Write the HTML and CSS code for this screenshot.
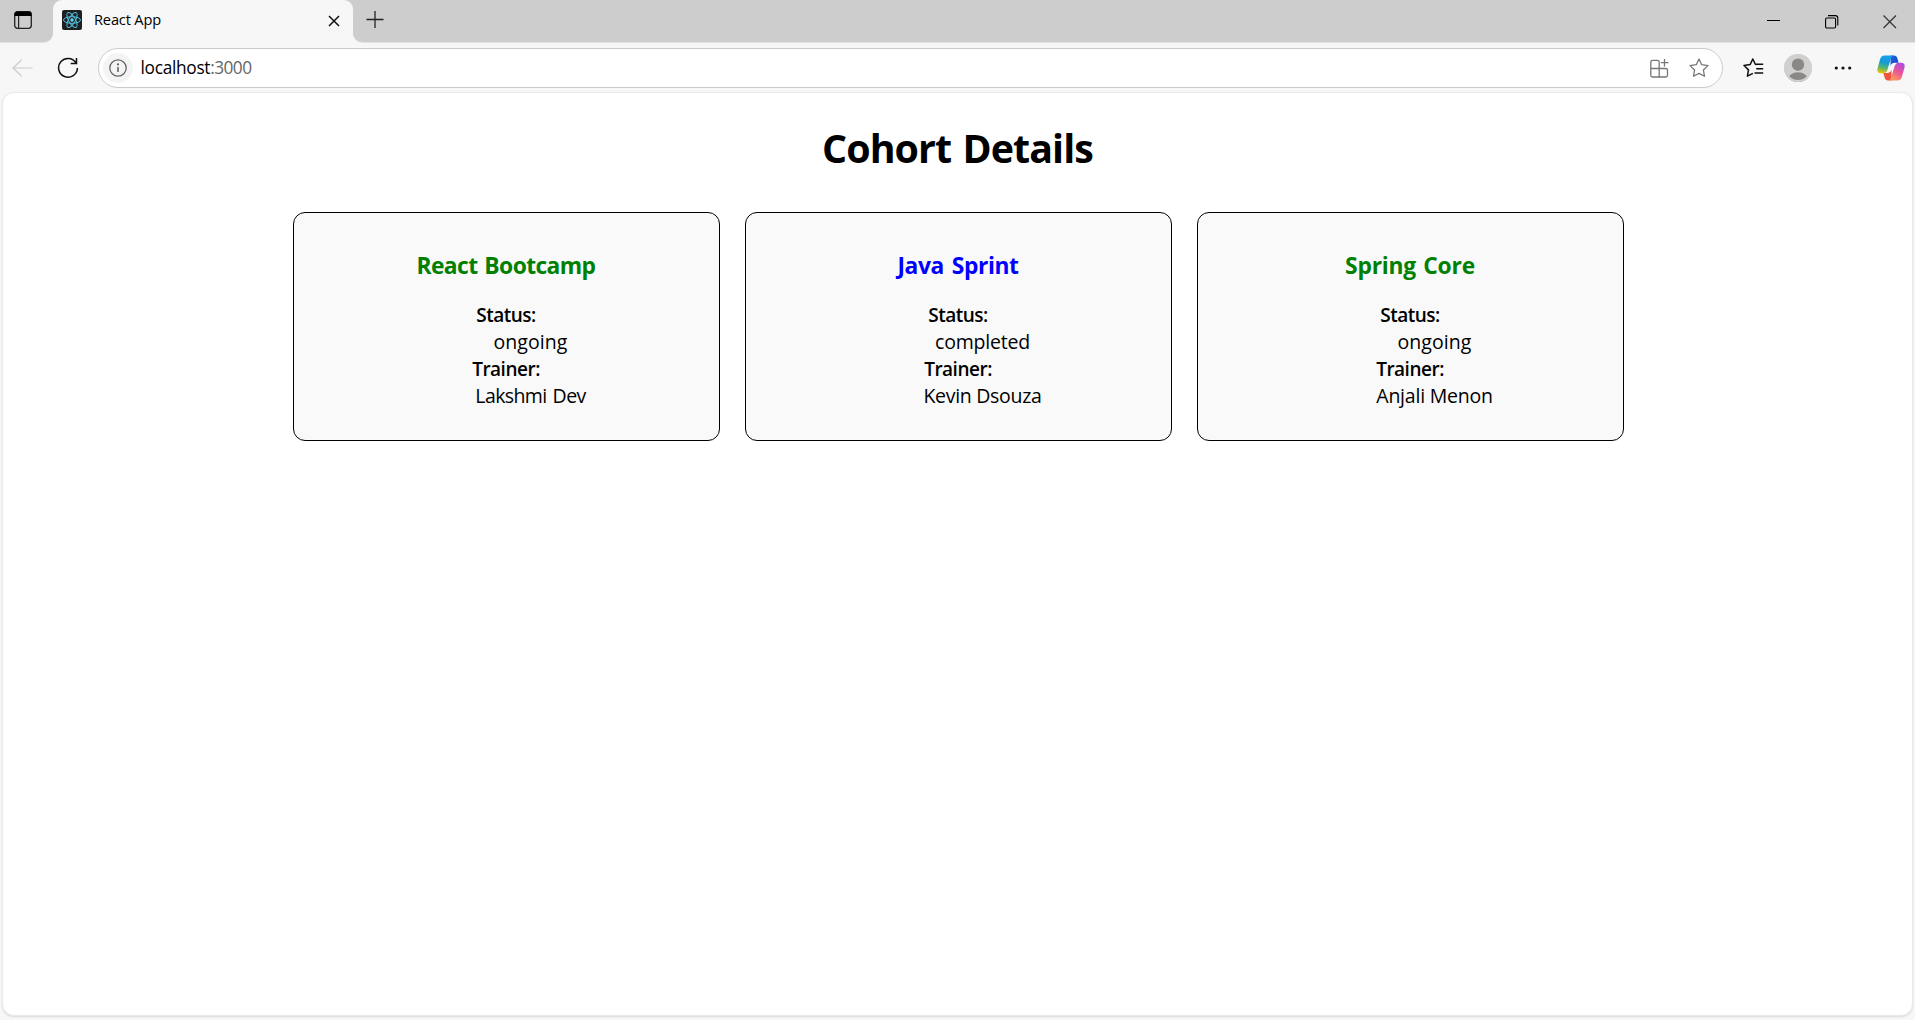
FILE: index.html
```
<!DOCTYPE html>
<html lang="en">
<head>
<meta charset="utf-8">
<title>React App</title>
<link rel="stylesheet" href="styles.css">
</head>
<body>
<div class="browser">
  <header class="tabstrip">
    <div class="tab-actions">
      <svg width="20" height="20" viewBox="0 0 20 20"><rect x="1.7" y="1.7" width="16.6" height="16.6" rx="2.8" fill="none" stroke="#222" stroke-width="1.3"/><path d="M1.5 6V4.5a3 3 0 0 1 3-3h11a3 3 0 0 1 3 3V6z" fill="#000"/><path d="M5.6 6v12" stroke="#222" stroke-width="1.2"/></svg>
    </div>
    <div class="tab">
      <svg class="favicon" width="20" height="20" viewBox="0 0 20 20"><rect width="20" height="20" rx="2" fill="#1d1f21"/><g fill="none" stroke="#53c1de" stroke-width="1"><ellipse cx="10" cy="10" rx="8.5" ry="3.3"/><ellipse cx="10" cy="10" rx="8.5" ry="3.3" transform="rotate(60 10 10)"/><ellipse cx="10" cy="10" rx="8.5" ry="3.3" transform="rotate(120 10 10)"/></g><circle cx="10" cy="10" r="1.7" fill="#61dafb"/></svg>
      <span class="tab-title">React App</span>
      <svg class="tab-close" width="12" height="12" viewBox="0 0 12 12"><path d="M1 1l10 10M11 1L1 11" stroke="#111" stroke-width="1.5"/></svg>
    </div>
    <svg class="new-tab" width="18" height="18" viewBox="0 0 18 18"><path d="M9 .5v17M.5 9h17" stroke="#222" stroke-width="1.3"/></svg>
    <div class="window-controls">
      <svg width="14" height="14" viewBox="0 0 14 14"><path d="M0 5.5h13" stroke="#000"/></svg>
      <svg width="14" height="14" viewBox="0 0 14 14"><rect x=".6" y="3" width="10" height="10" rx="1.2" fill="none" stroke="#000" stroke-width="1.1"/><path d="M3 .6h7.2a2.6 2.6 0 0 1 2.6 2.6v7.3" fill="none" stroke="#000" stroke-width="1.1"/></svg>
      <svg width="14" height="14" viewBox="0 0 14 14"><path d="M.5 .5l12.5 12.5M13 .5L.5 13" stroke="#333" stroke-width="1.2"/></svg>
    </div>
  </header>
  <div class="toolbar">
    <svg class="back" width="21" height="18" viewBox="0 0 21 18"><path d="M20.5 9H1M9.7 .8L1 9l8.7 8.2" fill="none" stroke="#ccc" stroke-width="1.2"/></svg>
    <svg class="reload" width="22" height="22" viewBox="0 0 22 22"><path d="M19.3 6.4A9.4 9.4 0 1 0 20.4 11M19.5 1v5.6h-5.8" fill="none" stroke="#111" stroke-width="1.5"/></svg>
    <div class="address">
      <span class="site-info"><svg width="18" height="18" viewBox="0 0 18 18"><circle cx="9" cy="9" r="8.2" fill="none" stroke="#666" stroke-width="1.3"/><path d="M9 8v5" stroke="#666" stroke-width="1.6"/><circle cx="9" cy="5.4" r="1.1" fill="#666"/></svg></span>
      <span class="url"><span class="host">localhost</span><span class="port">:3000</span></span>
      <svg class="apps" width="19" height="19" viewBox="0 0 19 19"><path d="M9.2 18V3a1.7 1.7 0 0 0-1.7-1.7h-5A1.7 1.7 0 0 0 .8 3v13.300a1.700 1.700 0 0 0 1.700 1.700h13.300a1.700 1.700 0 0 0 1.700-1.700v-5A1.700 1.700 0 0 0 15.800 9.500H.8M14.500 0v7.400M10.800 3.700h7.600" fill="none" stroke="#777" stroke-width="1.3"/></svg>
      <svg class="star" width="20" height="20" viewBox="0 0 20 20"><path d="M10 1l2.700 5.700 6.300.9-4.600 4.400 1.100 6.300L10 15.400l-5.500 2.900L5.600 12 1 7.600l6.300-.9z" fill="none" stroke="#777" stroke-width="1.300" stroke-linejoin="round"/></svg>
    </div>
    <svg class="favorites" width="21" height="20" viewBox="0 0 21 20"><path d="M13.300 6.400l-1-.1L9.800 1 7.200 6.400 1 7.500l4.500 4.400-1.100 6.300 5.500-2.900M12.300 6.300h7.900M13.200 10.700h7M11.500 15.100h8.700" fill="none" stroke="#111" stroke-width="1.500" stroke-linejoin="round"/></svg>
    <svg class="avatar" width="28" height="28" viewBox="0 0 28 28"><defs><clipPath id="face"><circle cx="14" cy="14" r="14"/></clipPath></defs><g clip-path="url(#face)"><rect width="28" height="28" fill="#d2d0ce"/><circle cx="14" cy="10.700" r="6.200" fill="#8a8886"/><ellipse cx="14" cy="26.500" rx="10.500" ry="8.300" fill="#8a8886"/></g><circle cx="14" cy="14" r="13" fill="none" stroke="#d2d0ce" stroke-width="2"/></svg>
    <svg class="more" width="18" height="4" viewBox="0 0 18 4"><g fill="#111"><circle cx="2.300" cy="2" r="1.600"/><circle cx="9" cy="2" r="1.600"/><circle cx="15.700" cy="2" r="1.600"/></g></svg>
    <svg class="copilot" width="28" height="26" viewBox="0 0 28 26">
      <defs>
        <linearGradient id="cool" x1=".5" y1="0" x2=".3" y2="1"><stop offset="0" stop-color="#179fee"/><stop offset=".4" stop-color="#159bd0"/><stop offset=".7" stop-color="#5db768"/><stop offset="1" stop-color="#f2c500"/></linearGradient>
        <linearGradient id="warm" x1=".8" y1="0" x2=".3" y2="1"><stop offset="0" stop-color="#a64ee8"/><stop offset=".5" stop-color="#ea5595"/><stop offset="1" stop-color="#ff9a5c"/></linearGradient>
        <linearGradient id="navy" x1="0" y1="0" x2="1" y2="1"><stop offset="0" stop-color="#2368e8"/><stop offset="1" stop-color="#123fb8"/></linearGradient>
      </defs>
      <path d="M13.500 .5H17c1.900 0 2.800 1.100 3.300 2.700l1.300 4.600H18c-2.500 0-3.700 1-4.500 3.300z" fill="url(#navy)"/>
      <path d="M14.500 25.500H11c-1.900 0-2.800-1.100-3.300-2.700L6.300 18H10c2.500 0 3.700-1 4.500-3.300z" fill="#f0563c"/>
      <path d="M7.500 .5h9c-1.500.3-2.200 1.500-2.700 3.200L10.500 14.500C9.700 17 8.500 18.300 6.200 18.300H3.700C.6 18.300-.1 16 .5 13.500L3 4.500C3.700 2 5.200.5 7.500.5z" fill="url(#cool)"/>
      <path d="M20.500 25.500h-9c1.500-.3 2.200-1.500 2.700-3.200l3.300-10.800c.8-2.500 2-3.800 4.300-3.800h2.500c3.100 0 3.800 2.300 3.200 4.800L25 21.500c-.7 2.500-2.200 4-4.500 4z" fill="url(#warm)"/>
    </svg>
  </div>
  <main class="page">
    <h1 class="heading">Cohort Details</h1>
    <div class="cards">
      <section class="card">
        <h3 class="name ongoing tight">React Bootcamp</h3>
        <dl class="details">
          <dt>Status:</dt><dd class="wide">ongoing</dd>
          <dt>Trainer:</dt><dd class="tight">Lakshmi Dev</dd>
        </dl>
      </section>
      <section class="card">
        <h3 class="name completed snug">Java Sprint</h3>
        <dl class="details">
          <dt>Status:</dt><dd>completed</dd>
          <dt>Trainer:</dt><dd class="snug">Kevin Dsouza</dd>
        </dl>
      </section>
      <section class="card">
        <h3 class="name ongoing loose">Spring Core</h3>
        <dl class="details">
          <dt>Status:</dt><dd class="wide">ongoing</dd>
          <dt>Trainer:</dt><dd>Anjali Menon</dd>
        </dl>
      </section>
    </div>
  </main>
</div>
</body>
</html>
```
FILE: styles.css
```
* { box-sizing: border-box; }
body {
  margin: 0;
  font-family: "Segoe UI", "Open Sans", "Noto Sans", sans-serif;
  color: #000;
}
svg { display: block; flex: none; }
.browser {
  height: 100vh;
  display: flex;
  flex-direction: column;
  background: #f7f7f7;
  overflow: hidden;
}

/* Tab strip */
.tabstrip { display: flex; height: 42px; flex: none; background: #f7f7f7; }
.tab-actions {
  width: 53px;
  padding: 10px 0 0 13px;
  background: #cdcdcd;
  border-bottom-right-radius: 9px;
  box-shadow: 0 1px #e4e4e4;
}
.tab {
  width: 300px;
  display: flex;
  padding: 0 13.5px 0 9px;
  background: linear-gradient(#cdcdcd 0 12px, #f7f7f7 12px);
  position: relative;
  z-index: 0;
}
.tab::before {
  content: "";
  position: absolute;
  inset: 0;
  z-index: -1;
  background: #f7f7f7;
  border-radius: 9px 9px 0 0;
}
.favicon { margin-top: 10px; }
.tab-title {
  margin: 7px 0 0 12px;
  font-size: 14.6px;
  line-height: 24px;
  letter-spacing: -0.16px;
}
.tab-close { margin: 14.500px 0 0 auto; }
.new-tab {
  box-sizing: content-box;
  padding: 10.5px 0 13.5px 13px;
  background: #cdcdcd;
  border-bottom-left-radius: 9px;
  box-shadow: 0 1px #e4e4e4;
}
.window-controls {
  flex: 1;
  display: flex;
  justify-content: flex-end;
  gap: 44px;
  padding: 15px 18.5px 0 0;
  background: #cdcdcd;
  box-shadow: 0 1px #e4e4e4;
}

/* Toolbar */
.toolbar {
  display: flex;
  align-items: center;
  height: 50px;
  flex: none;
  padding: 1px 10px 0 12px;
}
.reload { margin-left: 24px; }
.address {
  width: 1625px;
  height: 40px;
  margin: 1px 0 0 19px;
  padding: 0 13px 0 4px;
  display: flex;
  align-items: center;
  background: #fff;
  border: 1px solid #cbcbcb;
  border-radius: 20px;
}
.site-info {
  width: 30px;
  height: 30px;
  display: grid;
  place-items: center;
  border-radius: 50%;
  background: #f4f4f4;
}
.url { margin: -1px auto 0 7.5px; font-size: 17.3px; }
.host { letter-spacing: -0.3px; }
.port { letter-spacing: -0.55px; color: #666; }
.star { margin-left: 20px; }
.favorites { margin-left: 19.5px; }
.avatar { margin-left: 20px; }
.more { margin-left: 22px; }
.copilot { margin-left: auto; }

/* Page */
.page {
  flex: 1;
  margin: 0 2px 4px;
  background: #fff;
  border: 1px solid #e9e9e9;
  border-radius: 12px;
  box-shadow: 0 1px 2px rgba(0, 0, 0, 0.12);
  text-align: center;
}
.heading {
  margin: 28px 0 36px;
  font-size: 39.4px;
  line-height: 55px;
  letter-spacing: -0.93px;
  word-spacing: 2px;
}
.cards {
  display: flex;
  justify-content: center;
  gap: 25px;
  padding-left: 2px;
}
.card {
  width: 427px;
  height: 229px;
  padding: 37px 1px 0 0;
  background: #f9f9f9;
  border: 1px solid #000;
  border-radius: 12px;
}
.name {
  margin: 0 0 20px;
  font-size: 22.8px;
  line-height: 32px;
  letter-spacing: -0.2px;
  word-spacing: 1.5px;
}
.name.tight { letter-spacing: -0.58px; }
.name.snug { letter-spacing: -0.4px; word-spacing: 2.5px; }
.ongoing { color: green; }
.completed { color: blue; }
.details { margin: 0; font-size: 19.5px; line-height: 27px; }
.details dt { font-size: 19px; font-weight: 600; letter-spacing: -0.5px; }
.details dd { margin: -1px 0 1px 49px; letter-spacing: -0.22px; }
.details dd.snug { letter-spacing: -0.3px; }
.details dd.tight { letter-spacing: -0.6px; word-spacing: 1.5px; }
.details dd.wide { letter-spacing: 0.05px; }
```
